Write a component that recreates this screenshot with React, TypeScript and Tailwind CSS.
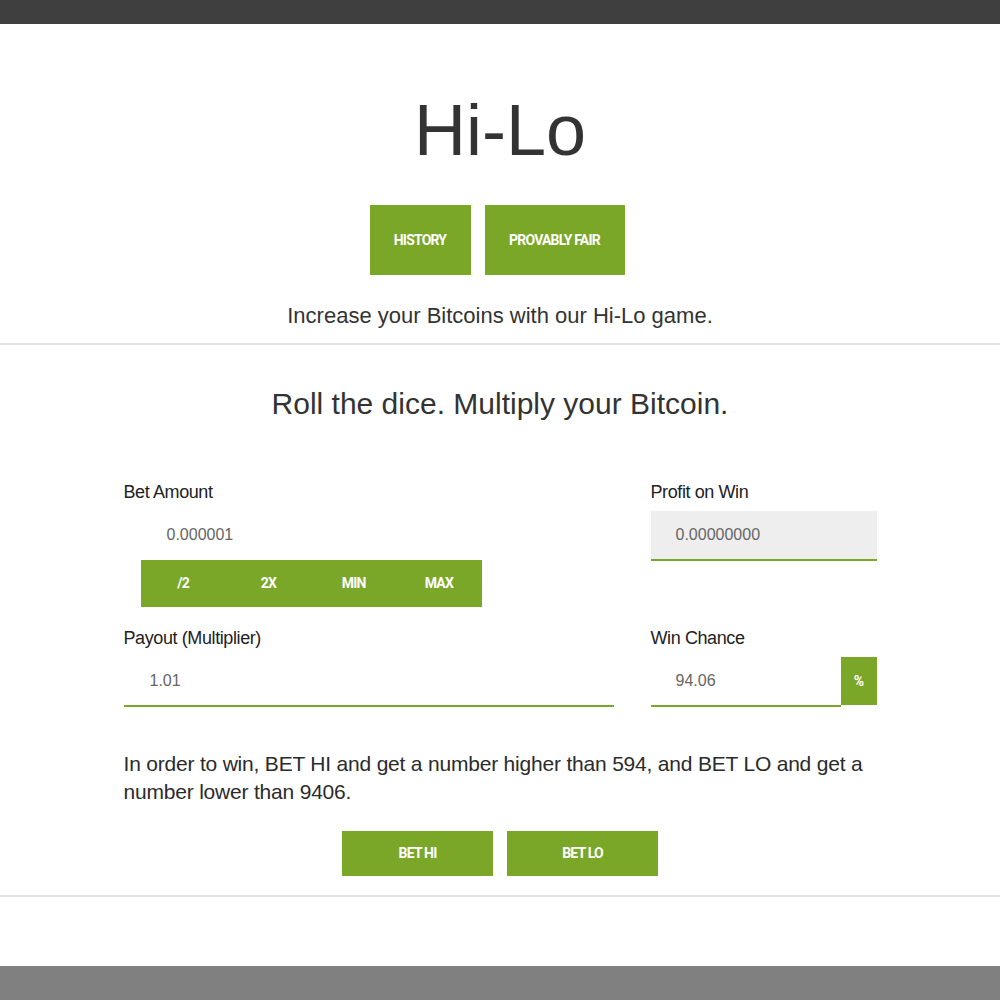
import React from "react";

const sans = "font-['Liberation_Sans',Arial,sans-serif]";
const btn = "font-['Roboto',sans-serif] font-bold text-white uppercase text-[14px] tracking-[-0.8px] bg-[#7aa728] flex items-center justify-center";

function Label({ children }: { children: React.ReactNode }) {
  return <div className="h-[20px] text-[18px] leading-[20px] text-[#222] tracking-[-0.4px] mb-[9px]">{children}</div>;
}

export default function App() {
  const steps = ["/2", "2X", "MIN", "MAX"];

  return (
    <main className={`${sans} min-h-[1000px] flex flex-col bg-white`}>
      <div className="h-[24px] bg-[#3f3f3f]" />

      <div className="h-[942px] flex flex-col">
        <section className="pt-[70px] flex flex-col items-center">
          <h1 className="text-[72px] leading-[72px] text-[#333] font-normal">Hi-Lo</h1>
          <div className="mt-[39px] pr-[6px] flex gap-[14px]">
            <button className={`${btn} w-[101px] h-[70px]`}>History</button>
            <button className={`${btn} w-[140px] h-[70px]`}>Provably Fair</button>
          </div>
          <p className="mt-[26px] text-[22px] leading-[30px] text-[#333]">
            Increase your Bitcoins with our Hi-Lo game.
          </p>
        </section>

        <div className="mt-[12px] border-t-2 border-[#e6e6e6]" />

        <section className="flex flex-col items-center">
          <h2 className="mt-[40px] text-[30px] leading-[38px] text-[#333]">
            Roll the dice. Multiply your Bitcoin.
          </h2>

          <div className="mt-[59px] w-[753px] grid grid-cols-[490px_226px] gap-x-[37px] gap-y-[21px] items-start">
            {/* bet amount */}
            <div>
              <Label>Bet Amount</Label>
              <div className="h-[48px] pl-[43px] flex items-center text-[16px] text-[#666]">0.000001</div>
              <div className="mt-[1px] ml-[17px] w-[341px] h-[47px] bg-[#7aa728] grid grid-cols-4">
                {steps.map(s => (
                  <button key={s} className={`${btn} h-[47px]`}>{s}</button>
                ))}
              </div>
            </div>

            {/* profit */}
            <div>
              <Label>Profit on Win</Label>
              <div className="h-[50px] bg-[#eeeeee] border-b-2 border-[#7aa728] pl-[25px] flex items-center text-[16px] text-[#666]">
                0.00000000
              </div>
            </div>

            {/* payout */}
            <div>
              <Label>Payout (Multiplier)</Label>
              <div className="h-[50px] border-b-2 border-[#7aa728] pl-[26px] flex items-center text-[16px] text-[#666]">
                1.01
              </div>
            </div>

            {/* win chance */}
            <div>
              <Label>Win Chance</Label>
              <div className="flex items-start">
                <div className="flex-1 h-[50px] border-b-2 border-[#7aa728] pl-[25px] flex items-center text-[16px] text-[#666]">
                  94.06
                </div>
                <div className={`${btn} w-[36px] h-[48px] text-[12px]`}>%</div>
              </div>
            </div>
          </div>

          <p className="mt-[43px] w-[753px] text-[21px] leading-[28px] text-[#2b2b2b] tracking-[-0.2px]">
            In order to win, BET HI and get a number higher than 594, and BET LO and get a number lower than 9406.
          </p>

          <div className="mt-[25px] flex gap-[14px]">
            <button className={`${btn} w-[151px] h-[45px]`}>Bet Hi</button>
            <button className={`${btn} w-[151px] h-[45px]`}>Bet Lo</button>
          </div>
        </section>

        <div className="mt-[19px] border-t-2 border-[#e6e6e6]" />
      </div>

      <div className="h-[34px] bg-[#808080]" />
    </main>
  );
}
